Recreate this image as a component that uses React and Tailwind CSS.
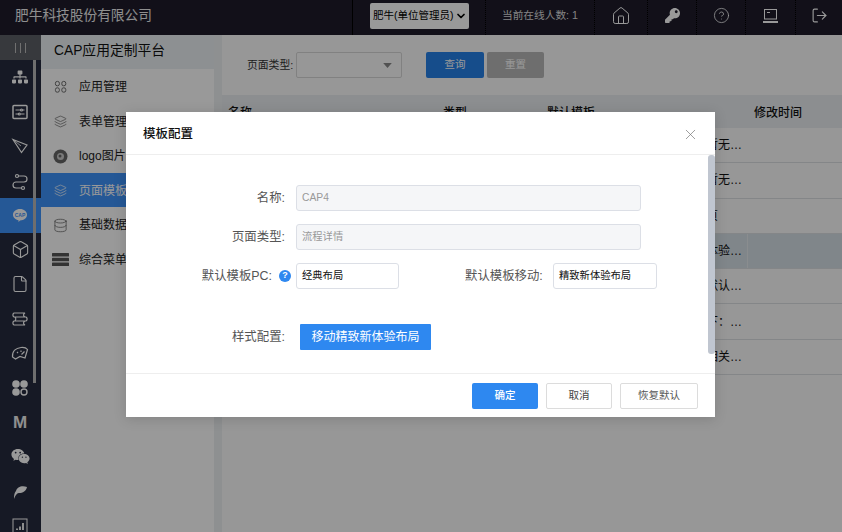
import React from "react";
import { House, CircleHelp, LogOut, Box, File, Layers, Database, ChevronDown, X } from "lucide-react";
import { FaKey, FaSitemap, FaWeixin } from "react-icons/fa";

const Svg = ({ children, size = 20 }) => (
  <svg width={size} height={size} viewBox="0 0 20 20" fill="none" stroke="currentColor" strokeWidth="1.2">{children}</svg>
);

const railIcons = [
  <FaSitemap size={16} />,
  <Svg><rect x="3" y="3.5" width="14" height="13" rx="1" strokeWidth="1.5" /><path d="M5.5 8h5M13 8h1.5M5.5 12H8M10.5 12h4" /><circle cx="11.5" cy="8" r="1" /><circle cx="9.3" cy="12" r="1" /></Svg>,
  <Svg><path d="M3 3.5 17 9l-5.5 7.5z" /><path d="M3 3.5 11 10" strokeWidth="0.8" /></Svg>,
  <Svg><path d="M8 5h6a3 3 0 0 1 0 6H6a3 3 0 0 0 0 6h6" /><circle cx="7" cy="5" r="1.5" /><circle cx="13" cy="17" r="1.5" /></Svg>,
  <svg width="20" height="20" viewBox="0 0 20 20"><path d="M10 4c4 0 7 2.500 7 5.800s-3 5.700-7 5.700l-1.500 1.500v-1.700c-3-.7-5.500-2.800-5.500-5.500C3 6.500 6 4 10 4z" fill="#fff" /><text x="10" y="11.500" fontSize="5" fontWeight="700" textAnchor="middle" fill="#3f93fa" fontFamily="Liberation Sans">CAP</text></svg>,
  <Box size={19} strokeWidth={1.4} />,
  <File size={18} strokeWidth={1.5} />,
  <Svg><path d="M4 4h11c-2 1-2 3 0 4H4c-1.500-1-1.500-3 0-4zM5 8h11c1.500 1 1.500 3 0 4H5c1-1 1-3 0-4zM4 12h11c-2 1-2 3 0 4H4c-1.500-1-1.500-3 0-4z" /></Svg>,
  <Svg><path d="M2.500 14C2 8 6 5 11 4.500c3-.3 5.500.7 6.500 2L15 15l-5-1.500L5.500 16z" /><path d="M7 9l1 1M11 7.500v1.500M14.500 8.500l-3 3" /></Svg>,
  <svg width="20" height="20" viewBox="0 0 20 20" fill="#fff"><circle cx="6" cy="6" r="3.800" /><circle cx="14" cy="6" r="3.800" /><circle cx="6" cy="14" r="3.800" /><circle cx="14" cy="14" r="3" fill="none" stroke="#fff" strokeWidth="1.4" /></svg>,
  <span className="text-[17px] leading-none font-bold text-[#eee]">M</span>,
  <FaWeixin size={19} />,
  <svg width="20" height="20" viewBox="0 0 20 20" fill="#fff"><path d="M4 18c0-5 1-7 2-8 1-4 6-6 11-4-1 4-4 6-8 6-2 0-2 1-3 2-1 1-1.500 3-2 4z" /></svg>,
  <Svg><rect x="3" y="3" width="14" height="14" strokeWidth="1" /><path d="M7 14v-1.500M10 14v-3.500M13 14V7" strokeWidth="1.800" /></Svg>,
];

const menu = [
  ["应用管理", <Svg size={16}><rect x="3" y="3" width="5" height="5.500" rx="2.300" /><rect x="11" y="3" width="5" height="5.500" rx="2.300" /><rect x="3" y="11" width="5" height="5.500" rx="2.300" /><rect x="11" y="11" width="5" height="5.500" rx="2.300" /></Svg>],
  ["表单管理", <Layers size={13} strokeWidth={1.3} />],
  ["logo图片", <svg width="15" height="15" viewBox="0 0 15 15"><circle cx="7.500" cy="7.500" r="7" fill="#666" /><circle cx="7.500" cy="7.500" r="3.500" fill="#ccc" /><circle cx="7" cy="7" r="1.500" fill="#666" /></svg>],
  ["页面模板", <Layers size={13} strokeWidth={1.3} />],
  ["基础数据", <Database size={15} strokeWidth={1.2} />],
  ["综合菜单", <svg width="17" height="13" viewBox="0 0 17 13" fill="#555"><rect y="0" width="17" height="3.500" rx=".5" /><rect y="4.700" width="17" height="3.500" rx=".5" /><rect y="9.400" width="17" height="3.500" rx=".5" /></svg>],
];

const rows = [
  "经典布局页面模板配置内当前暂无配置",
  "经典布局页面模板配置内当前暂无配置",
  "流程详情默认模板经典布局首页",
  "流程详情默认模板移动精致新体验布局",
  "流程详情页面模板配置方式为默认模板",
  "流程详情页面模板配置说明如下：详情说明",
  "流程详情页面模板配置说明参相关说明文字",
];

const labelCls = "text-[12.4px] text-[#555]";
const inputCls = "h-[26px] flex items-center px-[5px] rounded-[3px] border border-[#dcdfe6] text-[10.3px]";
const hdr = "h-full flex items-center justify-center pb-[4px] border-l border-dotted border-black";

export default function App() {
  return (
    <div className="relative w-[842px] h-[532px] overflow-hidden bg-[#fcfcfc] flex flex-col" style={{ fontFamily: '"Liberation Sans","Noto Sans CJK SC",sans-serif' }}>
      <header className="h-[35px] shrink-0 bg-[#1e1c2b] flex items-center text-white">
        <div className="w-[352px] pl-[15px] pb-[3px] text-[13.7px] text-[#eee]">肥牛科技股份有限公司</div>
        <div className="w-[133px] h-full flex items-center pl-[17px] pb-[3px] border-l border-black">
          <div className="w-[99px] h-[26px] bg-white text-black rounded-[2px] flex items-center pl-[3px] gap-px text-[10.5px] whitespace-nowrap">
            肥牛(单位管理员)<ChevronDown size={12} strokeWidth={3.500} />
          </div>
        </div>
        <div className={hdr + " w-[109px] text-[10.7px] text-[#ddd] whitespace-nowrap"}>当前在线人数: 1</div>
        <div className={hdr + " w-[53px]"}><House size={20} strokeWidth={1.200} /></div>
        <div className={hdr + " w-[49px]"}><FaKey size={15} /></div>
        <div className={hdr + " w-[49px]"}><CircleHelp size={17} strokeWidth={1.100} /></div>
        <div className={hdr + " w-[50px]"}>
          <svg width="17" height="16" viewBox="0 0 17 16" fill="none" stroke="currentColor"><rect x="2.500" y="1.500" width="12" height="9.500" /><path d="M5 4.500h3" /><path d="M1 14h15" strokeWidth="2" /></svg>
        </div>
        <div className={hdr + " flex-1"}><LogOut size={17} strokeWidth={1.600} /></div>
      </header>

      <div className="flex-1 flex min-h-0">
        <nav className="relative w-[41px] shrink-0 bg-[#262b3e] text-white flex flex-col overflow-hidden">
          <div className="h-[25px] shrink-0 bg-[#5d5f66] flex items-center justify-center gap-[4px]">
            <i className="w-px h-[10px] bg-[#bbb]" /><i className="w-px h-[10px] bg-[#bbb]" /><i className="w-px h-[10px] bg-[#bbb]" />
          </div>
          {railIcons.map((ic, i) => (
            <div key={i} className={"h-[34.5px] shrink-0 flex items-center justify-center pr-px " + (i === 4 ? "bg-[#3f93fa]" : "")}>
              {ic}
            </div>
          ))}
          <div className="absolute left-[33px] top-[25px] w-[3px] h-[323px] bg-[#b8b8b8]" />
        </nav>

        <aside className="w-[173px] shrink-0 bg-white text-[#222] flex flex-col">
          <div className="h-[34px] bg-[#ecf1f4] flex items-center pl-[13px] pb-[1px] text-[13.8px] text-[#111]">CAP应用定制平台</div>
          {menu.map(([t, ic], i) => (
            <div key={t} className={"h-[34.500px] pt-[2px] flex items-center text-[12px] " + (i === 3 ? "bg-[#3f93fa] text-white" : "")}>
              <span className={"w-[38px] pl-[1px] flex items-center justify-center " + (i === 3 ? "text-white" : "text-[#666]")}>{ic}</span>
              <span>{t}</span>
            </div>
          ))}
        </aside>

        <main className="flex-1 min-w-0 ml-[8px] flex flex-col relative">
          <div className="absolute -left-[8px] top-0 bottom-0 w-[8px] bg-[#edf0f2]" />
          <div className="h-[60px] pl-[25px] flex items-center text-[10.8px] text-[#333]">
            <span className="w-[49px]">页面类型:</span>
            <div className="w-[106px] h-[26px] rounded-[2px] border border-[#d8d8d8] flex items-center justify-end pr-[9px]">
              <svg width="9" height="5" viewBox="0 0 12 7" fill="#888"><path d="M0 0h12L6 7z" /></svg>
            </div>
            <button className="ml-[24px] w-[58px] h-[26px] bg-[#2680e8] rounded-[2px] text-white text-[10.5px]">查询</button>
            <button className="ml-[3px] w-[57px] h-[26px] bg-[#b8b8b8] rounded-[2px] text-white text-[10.5px]">重置</button>
          </div>
          <div className="h-[33px] pt-[3px] bg-[#e9edf0] grid grid-cols-[215px_104px_207px_1fr] items-center text-[12px] font-medium text-[#111] pl-[6px]">
            <span>名称</span><span>类型</span><span>默认模板</span><span>修改时间</span>
          </div>
          {rows.map((r, i) => (
            <div key={i} className={"h-[35.300px] border-b border-[#dde0e3] grid grid-cols-[319px_200px_1fr] items-center text-[12px] text-[#111] pl-[6px] " + (i === 3 ? "bg-[#d6e0e6]" : "")}>
              <span />
              <span className="truncate pl-[3px] pr-[4px]">{r}</span>
              <span className={"h-full " + (i === 3 ? "border-l border-[#e6ecef]" : "")} />
            </div>
          ))}
        </main>
      </div>

      <div className="absolute inset-0 bg-black/40" />

      <div className="absolute left-[126px] top-[112px] w-[589px] h-[305px] bg-white shadow-[0_2px_12px_rgba(0,0,0,0.15)] flex flex-col">
        <div className="h-[43px] shrink-0 flex items-center justify-between pl-[17px] pr-[16px] pt-[2px] border-b border-[#eeeeee]">
          <span className="text-[12.500px] font-medium text-[#111]">模板配置</span>
          <X size={17} strokeWidth={1} className="text-[#777]" />
        </div>

        <div className="relative h-[218px] shrink-0 pt-[30px] flex flex-col">
          <div className="flex items-center h-[26px]">
            <div className={"w-[170px] pr-[11px] text-right " + labelCls}>名称:</div>
            <div className={inputCls + " w-[345px] bg-[#f5f6f8] text-[#999]"}>CAP4</div>
          </div>
          <div className="flex items-center h-[26px] mt-[13px]">
            <div className={"w-[170px] pr-[11px] text-right " + labelCls}>页面类型:</div>
            <div className={inputCls + " w-[345px] bg-[#f5f6f8] text-[#999]"}>流程详情</div>
          </div>
          <div className="flex items-center h-[26px] mt-[13px]">
            <div className={"w-[170px] pr-[5px] flex items-center justify-end gap-[7px] " + labelCls}>
              <span>默认模板PC:</span>
              <span className="w-[12px] h-[12px] rounded-full bg-[#2e88f0] text-white text-[9px] font-bold flex items-center justify-center">?</span>
            </div>
            <div className={inputCls + " w-[103px] text-[#111]"}>经典布局</div>
            <div className={"ml-[66px] w-[88px] whitespace-nowrap " + labelCls}>默认模板移动:</div>
            <div className={inputCls + " w-[104px] text-[#111]"}>精致新体验布局</div>
          </div>
          <div className="flex items-center h-[26px] mt-[35px]">
            <div className={"w-[170px] pr-[11px] text-right " + labelCls}>样式配置:</div>
            <button className="ml-[4px] w-[131px] h-[26px] bg-[#2e88f0] rounded-[1px] text-white text-[12px]">移动精致新体验布局</button>
          </div>
          <div className="absolute right-0 top-0 w-[7px] h-[199px] rounded-[3px] bg-[#c0c6d0]" />
        </div>

        <div className="flex-1 border-t border-[#eeeeee] flex items-center justify-end pr-[17px] text-[10.500px]">
          <button className="w-[66px] h-[26px] rounded-[2px] bg-[#2e88f0] text-white font-medium">确定</button>
          <button className="ml-[8px] w-[66px] h-[26px] rounded-[2px] border border-[#dcdcdc] text-[#444]">取消</button>
          <button className="ml-[8px] w-[78px] h-[26px] rounded-[2px] border border-[#dcdcdc] text-[#555]">恢复默认</button>
        </div>
      </div>
    </div>
  );
}
